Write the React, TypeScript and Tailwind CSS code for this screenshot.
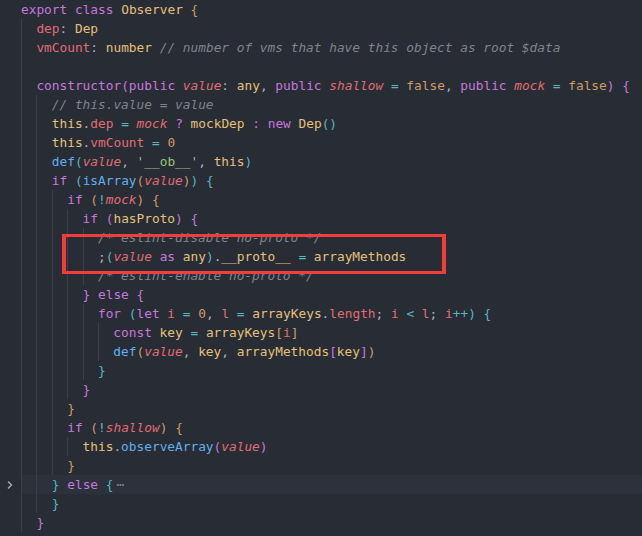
import React from 'react';

type Tok = [string, string];

// token colours (one dark pro)
const K = 'text-[#c678dd]';
const Y = 'text-[#e5c07b]';
const R = 'text-[#e06c75]';
const RI = 'text-[#e06c75] italic';
const W = 'text-[#abb2bf]';
const C = 'text-[#56b6c2]';
const O = 'text-[#d19a66]';
const B = 'text-[#61afef]';
const G = 'text-[#98c379]';
const CM = 'text-[#7f848e] italic';
const DIM = 'text-[#7f848e] ml-[3px]';

const S: Tok = [' ', W];

const lines: { indent: number; toks: Tok[] }[] = [
  { indent: 0, toks: [['export', K], S, ['class', K], S, ['Observer', Y], S, ['{', O]] },
  { indent: 1, toks: [['dep', R], [': ', W], ['Dep', Y]] },
  {
    indent: 1,
    toks: [['vmCount', R], [': ', W], ['number', Y], S, ['// number of vms that have this object as root $data', CM]],
  },
  { indent: 1, toks: [] },
  {
    indent: 1,
    toks: [
      ['constructor', K], ['(', K], ['public', K], S, ['value', RI], [': ', W], ['any', Y], [', ', W],
      ['public', K], S, ['shallow', RI], S, ['=', C], S, ['false', O], [', ', W],
      ['public', K], S, ['mock', RI], S, ['=', C], S, ['false', O], [')', K], S, ['{', K],
    ],
  },
  { indent: 2, toks: [['// this.value = value', CM]] },
  {
    indent: 2,
    toks: [
      ['this', Y], ['.', W], ['dep', R], S, ['=', C], S, ['mock', RI], S, ['?', K], S, ['mockDep', Y], S,
      [':', K], S, ['new', K], S, ['Dep', Y], ['()', C],
    ],
  },
  { indent: 2, toks: [['this', Y], ['.', W], ['vmCount', R], S, ['=', C], S, ['0', O]] },
  {
    indent: 2,
    toks: [['def', B], ['(', C], ['value', RI], [', ', W], ["'__ob__'", G], [', ', W], ['this', Y], [')', C]],
  },
  {
    indent: 2,
    toks: [['if', K], S, ['(', C], ['isArray', B], ['(', O], ['value', RI], [')', O], [')', C], S, ['{', C]],
  },
  { indent: 3, toks: [['if', K], S, ['(', O], ['!', C], ['mock', RI], [')', O], S, ['{', O]] },
  { indent: 4, toks: [['if', K], S, ['(', K], ['hasProto', Y], [')', K], S, ['{', K]] },
  { indent: 5, toks: [['/* eslint-disable no-proto */', CM]] },
  {
    indent: 5,
    toks: [
      [';', W], ['(', C], ['value', RI], S, ['as', K], S, ['any', Y], [')', C], ['.', W], ['__proto__', Y], S,
      ['=', C], S, ['arrayMethods', Y],
    ],
  },
  { indent: 5, toks: [['/* eslint-enable no-proto */', CM]] },
  { indent: 4, toks: [['}', K], S, ['else', K], S, ['{', K]] },
  {
    indent: 5,
    toks: [
      ['for', K], S, ['(', C], ['let', K], S, ['i', R], S, ['=', C], S, ['0', O], [', ', W], ['l', R], S, ['=', C],
      S, ['arrayKeys', Y], ['.', W], ['length', R], ['; ', W], ['i', R], S, ['<', C], S, ['l', R], ['; ', W],
      ['i', R], ['++', C], [')', C], S, ['{', C],
    ],
  },
  {
    indent: 6,
    toks: [['const', K], S, ['key', Y], S, ['=', C], S, ['arrayKeys', Y], ['[', O], ['i', R], [']', O]],
  },
  {
    indent: 6,
    toks: [
      ['def', B], ['(', O], ['value', RI], [', ', W], ['key', Y], [', ', W], ['arrayMethods', Y], ['[', K],
      ['key', Y], [']', K], [')', O],
    ],
  },
  { indent: 5, toks: [['}', C]] },
  { indent: 4, toks: [['}', K]] },
  { indent: 3, toks: [['}', O]] },
  { indent: 3, toks: [['if', K], S, ['(', O], ['!', C], ['shallow', RI], [')', O], S, ['{', O]] },
  { indent: 4, toks: [['this', Y], ['.', W], ['observeArray', B], ['(', K], ['value', RI], [')', K]] },
  { indent: 3, toks: [['}', O]] },
  { indent: 2, toks: [['}', C], S, ['else', K], S, ['{', C], ['⋯', DIM]] },
  { indent: 2, toks: [['}', C]] },
  { indent: 1, toks: [['}', K]] },
];

const FOLDED = 25;

const Chevron = () => (
  <svg width="16" height="16" viewBox="0 0 16 16" className="ml-[2px]">
    <path d="M6 4.5 L9.5 8 L6 11.5" fill="none" stroke="#a8b0bd" strokeWidth="1.3" />
  </svg>
);

export default function App() {
  return (
    <div className="relative w-[642px] h-[536px] overflow-hidden bg-[#282c34] font-['DejaVu_Sans_Mono',monospace] text-[12.8px]">
      {lines.map((line, i) => (
        <div key={i} className="flex h-[19px] items-center">
          <div className="flex w-[21px] shrink-0 items-center">{i === FOLDED && <Chevron />}</div>
          <div
            className={
              i === FOLDED
                ? 'flex h-full flex-1 items-center whitespace-pre bg-[#2c313c]'
                : 'flex h-full flex-1 items-center whitespace-pre'
            }
          >
            {Array.from({ length: line.indent }).map((_, k) => (
              <span key={k} className="inline-block h-full w-[15.4px] shrink-0 border-l border-[#3b4048]" />
            ))}
            <span>
              {line.toks.map(([text, cls], j) => (
                <span key={j} className={cls}>
                  {text}
                </span>
              ))}
            </span>
          </div>
        </div>
      ))}

      {/* red annotation box */}
      <div className="pointer-events-none absolute left-[62px] top-[234px] h-[40px] w-[384px] border-x-4 border-y-[3px] border-[#f43c3c]" />
    </div>
  );
}
